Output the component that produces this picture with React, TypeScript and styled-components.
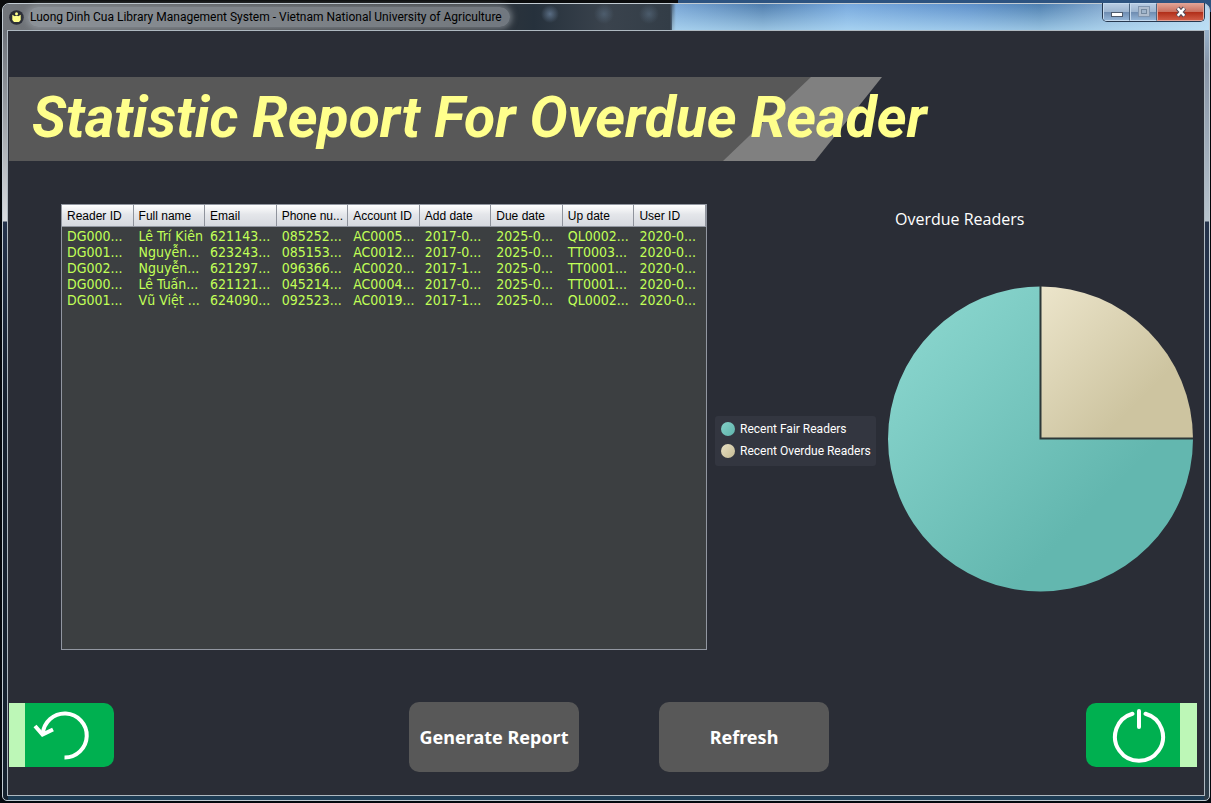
import React from "react";
import styled, { createGlobalStyle } from "styled-components";

const GlobalStyle = createGlobalStyle`
  *, *::before, *::after { box-sizing: border-box; }
  html { background: #030609; }
  body { margin: 0; }
  button { font: inherit; cursor: pointer; }
`;

const uiFont = `"Open Sans", "Noto Sans", sans-serif`;
const smallFont = `Roboto, "Open Sans", sans-serif`;

const Desktop = styled.div`
  display: flex;
  min-height: 100vh;
  padding: 3px 1px 2px 2px;
  background: linear-gradient(90deg, #0b0c0d 0 56%, #2d5380 56% 100%) top / 100% 12px no-repeat,
    linear-gradient(#030609, #05090f);
  font-family: ${uiFont};
`;

const Window = styled.div`
  flex: 1;
  min-width: 0;
  display: flex;
  flex-direction: column;
  padding: 0 4px 4px;
  border: 1px solid #c3ccd3;
  border-radius: 7px 7px 5px 5px;
  background:
    linear-gradient(#5e636b 0, #8f949a 90px, #d9dce0 217px, #24324a 218px, #16202e 400px, #16222f 100%) left / 5px 100% no-repeat,
    linear-gradient(#a5c9e8 0, #8794a6 60px, #b7c3cd 217px, #24324a 218px, #2c3c48 100%) right / 5px 100% no-repeat,
    #1d3c54;
`;

const TitleBar = styled.header`
  display: flex;
  align-items: flex-start;
  height: 26px;
  margin: 0 -4px;
  padding-left: 6px;
  border-radius: 6px 6px 0 0;
  background:
    linear-gradient(180deg, rgba(255, 255, 255, 0) 0, rgba(190, 230, 250, 0.65) 100%) right / 537px 100% no-repeat,
    radial-gradient(circle at 547px 10px, rgba(120, 145, 175, 0.6) 0, rgba(120, 145, 175, 0) 9px),
    radial-gradient(circle at 601px 10px, rgba(90, 110, 130, 0.6) 0, rgba(90, 110, 130, 0) 10px),
    radial-gradient(circle at 646px 10px, rgba(90, 110, 130, 0.6) 0, rgba(90, 110, 130, 0) 10px),
    linear-gradient(90deg, #72767b 0, #55585c 16%, #35383c 38%, #26313c 44%, #3a434d 50%, #333d47 55.3%, #78a5d5 55.8%, #4f7dae 63%, #78a9de 70%, #5f91cb 80%, #4e7fb0 86%, #8aadd2 92%, #b6d3ec 100%);
`;

const TitleText = styled.h1`
  margin: 3px 0 0 4px;
  padding: 0 8px 0 2px;
  border-radius: 10px;
  background: rgba(160, 166, 174, 0.6);
  box-shadow: 0 0 6px 2px rgba(160, 166, 174, 0.6);
  color: #000;
  font-family: ${smallFont};
  font-size: 12px;
  font-weight: 400;
  line-height: 20px;
  white-space: nowrap;
`;

const AppIcon = styled.svg`
  flex: none;
  margin-top: 6px;
`;

const Controls = styled.div`
  display: flex;
  margin: -1px 4px 0 auto;
  border: 1px solid #26384f;
  border-top: 0;
  border-radius: 0 0 5px 5px;
  overflow: hidden;
`;

const ControlButton = styled.button<{ $close?: boolean }>`
  display: grid;
  place-items: center;
  width: ${(p) => (p.$close ? 47 : 27)}px;
  height: 18px;
  padding: 0;
  border: 1px solid ${(p) => (p.$close ? "#e3a397" : "#c5d9ed")};
  border-right-color: ${(p) => (p.$close ? "#e3a397" : "#4b6480")};
  background: ${(p) =>
    p.$close
      ? "linear-gradient(#e0a092 0, #c9705f 48%, #b02d18 50%, #cf5a44 100%)"
      : "linear-gradient(#b7cbe2 0, #9db5d0 48%, #6d8bb0 50%, #93b4d6 100%)"};
`;

const Client = styled.main`
  flex: 1;
  display: flex;
  flex-direction: column;
  padding: 46px 0 23px 1px;
  border: 1px solid #aeb8c0;
  background: #2a2d36;
`;

const Banner = styled.div`
  width: 873px;
  height: 84px;
  background: #808080;
  clip-path: polygon(0 0, 100% 0, 806px 100%, 0 100%);

  &::before {
    content: "";
    display: block;
    height: 100%;
    background: #585858;
    clip-path: polygon(0 0, 802px 0, 714px 100%, 0 100%);
  }
`;

const BannerArea = styled.div`
  display: grid;
  & > * { grid-area: 1 / 1; }
`;

const Heading = styled.h2`
  z-index: 1;
  margin: 0;
  padding-left: 23px;
  color: #ffff8c;
  font-family: Roboto, sans-serif;
  font-size: 57px;
  font-style: italic;
  font-weight: 700;
  line-height: 82px;
  white-space: nowrap;
`;

const Content = styled.section`
  display: grid;
  grid-template-columns: minmax(0, 1fr) auto;
  gap: 8px;
  flex: 1;
  margin-top: 43px;
  padding: 0 9px 0 52px;
`;

const TablePanel = styled.div`
  min-height: 440px;
  border: 1px solid #9297a1;
  background: #3c3f41;
  overflow: hidden;
`;

const DataTable = styled.table`
  width: 100%;
  table-layout: fixed;
  border-collapse: separate;
  border-spacing: 0;
  text-align: left;
`;

const HeadCell = styled.th`
  height: 22px;
  padding: 0 0 0 5px;
  border-right: 1px solid #8f939c;
  border-bottom: 1px solid #9297a1;
  background: linear-gradient(#ffffff 0, #e4e6ea 45%, #d6d9df 100%);
  color: #000;
  font: 400 12px/20px "Liberation Sans", sans-serif;
  white-space: nowrap;
`;

const Cell = styled.td`
  height: 16px;
  padding: 0 0 0 5px;
  color: #c1ff57;
  font: 400 14px/16px "DejaVu Sans Condensed", "Noto Sans", sans-serif;
  white-space: nowrap;
  overflow: hidden;
`;

const TableBody = styled.tbody`
  &::before {
    content: "";
    display: block;
    height: 1px;
  }
`;

const Chart = styled.div`
  display: grid;
  grid-template-columns: 161px 308px;
  grid-template-rows: 81px auto;
  column-gap: 11px;
  align-content: start;
`;

const ChartTitle = styled.h3`
  grid-column: 2;
  margin: 0;
  padding: 3px 0 0 8px;
  color: #fff;
  font-size: 16px;
  font-weight: 400;
  line-height: 24px;
`;

const Legend = styled.ul`
  align-self: center;
  margin: 4px 0 0;
  padding: 2px 0 4px 6px;
  list-style: none;
  border-radius: 3px;
  background: #333640;
`;

const LegendItem = styled.li<{ $light: string; $dark: string }>`
  display: flex;
  align-items: center;
  gap: 5px;
  color: #fff;
  font-family: ${smallFont};
  font-size: 12px;
  line-height: 22px;
  white-space: nowrap;

  &::before {
    content: "";
    flex: none;
    width: 14px;
    height: 14px;
    border-radius: 50%;
    background: linear-gradient(135deg, ${(p) => p.$light}, ${(p) => p.$dark});
  }
`;

const Footer = styled.footer`
  display: flex;
  align-items: center;
  margin-top: 52px;
  padding-right: 7px;
`;

const Actions = styled.div`
  flex: 1;
  display: flex;
  justify-content: center;
  gap: 80px;
  padding-left: 38px;
`;

const ActionButton = styled.button`
  width: 170px;
  height: 70px;
  padding: 0;
  border: 0;
  border-radius: 10px;
  background: #585858;
  color: #fff;
  font: 700 18px/24px "Noto Sans", sans-serif;
  white-space: nowrap;
`;

const EdgeButton = styled.button<{ $side: "left" | "right" }>`
  display: flex;
  align-self: flex-start;
  align-items: center;
  width: ${(p) => (p.$side === "left" ? 105 : 111)}px;
  height: 64px;
  margin-top: 1px;
  padding: 0 0 0 ${(p) => (p.$side === "left" ? 8 : 26)}px;
  border: 0 solid #bdf7b7;
  border-${(p) => p.$side}-width: ${(p) => (p.$side === "left" ? 16 : 17)}px;
  border-radius: ${(p) => (p.$side === "left" ? "0 10px 10px 0" : "10px 0 0 10px")};
  background: #00b050;
`;

const columns = ["Reader ID", "Full name", "Email", "Phone nu...", "Account ID", "Add date", "Due date", "Up date", "User ID"];

const rows = [
  ["DG000...", "Lê Trí Kiên", "621143...", "085252...", "AC0005...", "2017-0...", "2025-0...", "QL0002...", "2020-0..."],
  ["DG001...", "Nguyễn...", "623243...", "085153...", "AC0012...", "2017-0...", "2025-0...", "TT0003...", "2020-0..."],
  ["DG002...", "Nguyễn...", "621297...", "096366...", "AC0020...", "2017-1...", "2025-0...", "TT0001...", "2020-0..."],
  ["DG000...", "Lê Tuấn...", "621121...", "045214...", "AC0004...", "2017-0...", "2025-0...", "TT0001...", "2020-0..."],
  ["DG001...", "Vũ Việt ...", "624090...", "092523...", "AC0019...", "2017-1...", "2025-0...", "QL0002...", "2020-0..."],
];

function PieChart() {
  return (
    <svg width="308" height="308" viewBox="0 0 308 308" role="img" aria-label="Overdue Readers">
      <defs>
        <linearGradient id="fair" x1="0" y1="0" x2="1" y2="1">
          <stop offset="0.1" stopColor="#89d5cd" />
          <stop offset="0.7" stopColor="#63b7af" />
        </linearGradient>
        <linearGradient id="overdue" x1="0" y1="0" x2="1" y2="1">
          <stop offset="0" stopColor="#ece5cb" />
          <stop offset="0.7" stopColor="#cdc4a0" />
        </linearGradient>
      </defs>
      <path d="M153.500 154V1.500A152.500 152.500 0 1 0 306 154Z" fill="url(#fair)" />
      <path d="M153.500 154V1.500A152.500 152.500 0 0 1 306 154Z" fill="url(#overdue)" />
      <path d="M153.500 1V153.500H306" fill="none" stroke="#2d3838" strokeWidth="2" />
    </svg>
  );
}

export default function App() {
  return (
    <Desktop>
      <GlobalStyle />
      <Window>
        <TitleBar>
          <AppIcon width="15" height="15" viewBox="0 0 15 15" aria-hidden="true">
            <circle cx="7.500" cy="7.500" r="7.300" fill="#2a2d36" />
            <path d="M3.300 4.800L5.800 6.300L6.800 5.800H8.200L9.200 6.300L11.700 4.800V10L10 12H5L3.300 10Z" fill="#ffff8c" />
            <circle cx="7.500" cy="3.800" r="1.500" fill="#ffff8c" />
          </AppIcon>
          <TitleText>Luong Dinh Cua Library Management System - Vietnam National University of Agriculture</TitleText>
          <Controls>
            <ControlButton aria-label="Minimize">
              <svg width="14" height="12" viewBox="0 0 14 12">
                <rect x="1.500" y="6.500" width="11" height="4" fill="#fff" stroke="#4c5a6c" />
              </svg>
            </ControlButton>
            <ControlButton aria-label="Maximize" disabled>
              <svg width="14" height="12" viewBox="0 0 14 12">
                <rect x="2.500" y="1.500" width="9" height="8" fill="none" stroke="#aebccd" strokeWidth="3" />
                <rect x="1.500" y="0.500" width="11" height="10" fill="none" stroke="#8095ae" />
                <rect x="4.500" y="3.500" width="5" height="4" fill="#9fb4cb" stroke="#74899f" />
              </svg>
            </ControlButton>
            <ControlButton $close aria-label="Close">
              <svg width="14" height="12" viewBox="0 0 14 12">
                <path d="M3.500 2L10.500 10M10.500 2L3.500 10" stroke="#574b58" strokeWidth="4.500" />
                <path d="M3.700 2.200L10.300 9.800M10.300 2.200L3.700 9.800" stroke="#fff" strokeWidth="2.500" />
              </svg>
            </ControlButton>
          </Controls>
        </TitleBar>
        <Client>
          <BannerArea>
            <Banner />
            <Heading>Statistic Report For Overdue Reader</Heading>
          </BannerArea>
          <Content>
            <TablePanel>
              <DataTable>
                <thead>
                  <tr>
                    {columns.map((name) => (
                      <HeadCell key={name} scope="col">{name}</HeadCell>
                    ))}
                  </tr>
                </thead>
                <TableBody>
                  {rows.map((row, r) => (
                    <tr key={r}>
                      {row.map((value, c) => (
                        <Cell key={c}>{value}</Cell>
                      ))}
                    </tr>
                  ))}
                </TableBody>
              </DataTable>
            </TablePanel>
            <Chart>
              <ChartTitle>Overdue Readers</ChartTitle>
              <Legend>
                <LegendItem $light="#84d1c9" $dark="#5fb3ab">Recent Fair Readers</LegendItem>
                <LegendItem $light="#e8e0c4" $dark="#c5bb94">Recent Overdue Readers</LegendItem>
              </Legend>
              <PieChart />
            </Chart>
          </Content>
          <Footer>
            <EdgeButton $side="left" aria-label="Back">
              <svg width="60" height="56" viewBox="0 0 60 56" fill="none" stroke="#fff">
                <path d="M31.500 50.500A22 22 0 1 0 9.800 27" strokeWidth="4" />
                <path d="M2 19L9.500 27.500L20 22.500" strokeWidth="4" strokeLinejoin="miter" />
              </svg>
            </EdgeButton>
            <Actions>
              <ActionButton>Generate Report</ActionButton>
              <ActionButton>Refresh</ActionButton>
            </Actions>
            <EdgeButton $side="right" aria-label="Exit">
              <svg width="54" height="56" viewBox="0 0 54 56" fill="none" stroke="#fff" strokeWidth="4" strokeLinecap="round">
                <path d="M20.500 6.700A24 24 0 1 0 33.500 6.700" />
                <path d="M27 4V20" />
              </svg>
            </EdgeButton>
          </Footer>
        </Client>
      </Window>
    </Desktop>
  );
}
